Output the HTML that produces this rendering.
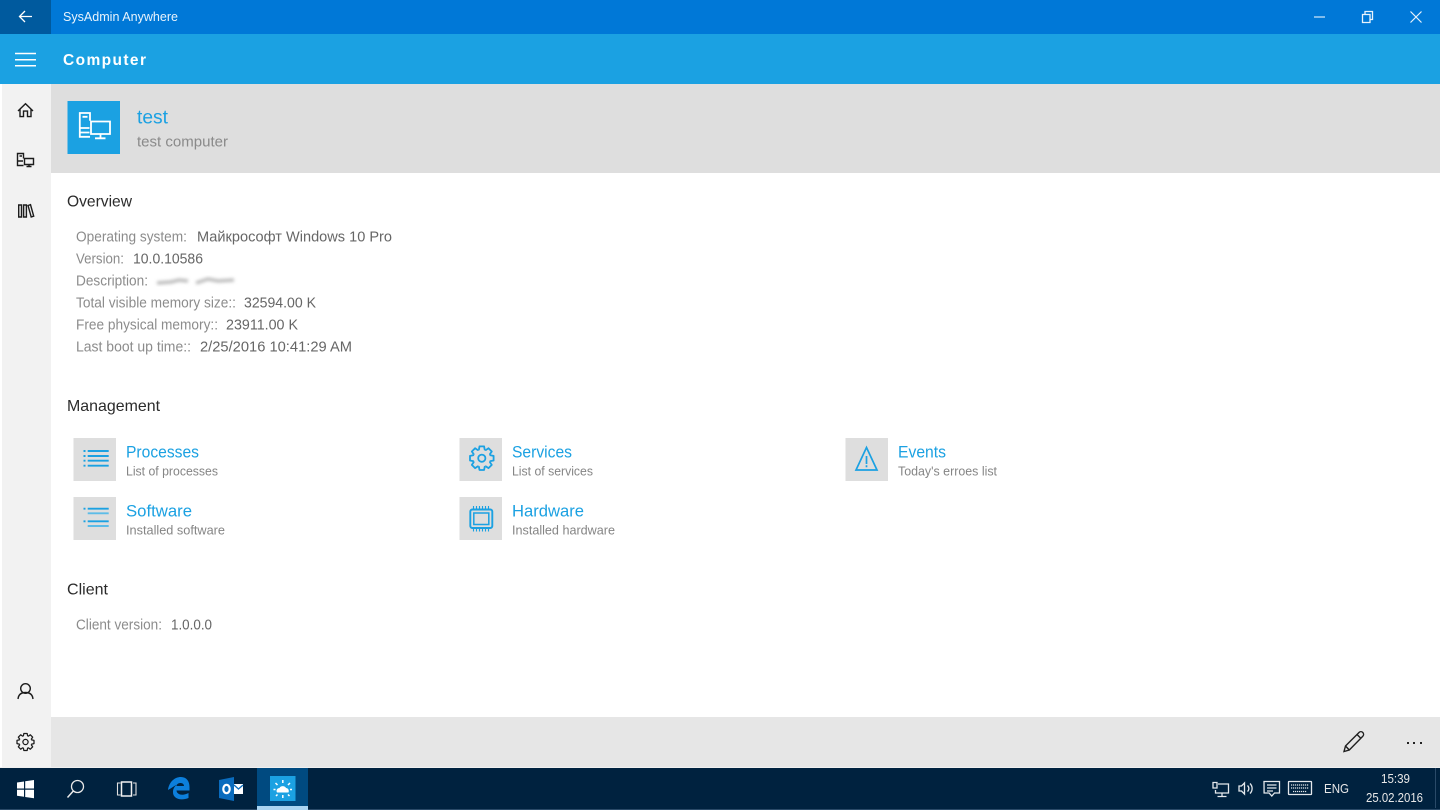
<!DOCTYPE html>
<html><head><meta charset="utf-8"><title>SysAdmin Anywhere</title>
<style>html,body{margin:0;padding:0;background:#fff;overflow:hidden}svg{display:block}text{font-family:"Liberation Sans",sans-serif}.fg{filter:blur(.3px)}</style></head>
<body>
<svg width="1440" height="810" viewBox="0 0 1440 810" xmlns="http://www.w3.org/2000/svg">
<defs>
<filter id="b" x="-20%" y="-100%" width="140%" height="300%"><feGaussianBlur stdDeviation="1.5"/></filter>
<g id="gear">
<path id="t" d="M-3.44 -8.31L-2.9 -8.6L-2.3 -11.8H2.3L2.9 -8.6L3.44 -8.31"/>
<use href="#t" transform="rotate(45)"/><use href="#t" transform="rotate(90)"/><use href="#t" transform="rotate(135)"/><use href="#t" transform="rotate(180)"/><use href="#t" transform="rotate(225)"/><use href="#t" transform="rotate(270)"/><use href="#t" transform="rotate(315)"/>
<circle r="3.600"/>
</g>
</defs>
<rect width="1440" height="810" fill="#fff"/>
<rect width="1440" height="34" fill="#0078d7"/>
<rect width="51" height="34" fill="#005a9e"/>
<rect y="34" width="1440" height="50" fill="#1ba1e2"/>
<rect y="84" width="51" height="684" fill="#f2f2f2"/>
<rect y="84" width="2" height="684" fill="#fff"/>
<rect x="51" y="84" width="1389" height="89" fill="#dedede"/>
<rect x="51" y="717" width="1389" height="50" fill="#e6e6e6"/>
<rect y="767" width="1440" height="1" fill="#f0f0f0"/>
<rect y="768" width="1440" height="42" fill="#00223f"/>
<rect y="809" width="1440" height="1" fill="#2a4a68"/>
<rect x="67.500" y="101" width="52.500" height="53" fill="#1ba1e2"/>
<rect x="73.500" y="438" width="42.500" height="43" fill="#dedede"/>
<rect x="73.500" y="497" width="42.500" height="43" fill="#dedede"/>
<rect x="459.500" y="438" width="42.500" height="43" fill="#dedede"/>
<rect x="459.500" y="497" width="42.500" height="43" fill="#dedede"/>
<rect x="845.500" y="438" width="42.500" height="43" fill="#dedede"/>
<rect x="257" y="768" width="51" height="38" fill="#004a80"/>
<rect x="257" y="806" width="51" height="4" fill="#a9d4f2"/>
<rect x="270" y="776" width="25.500" height="25" fill="#1ba1e2"/>

<g class="fg">
<!-- title bar -->
<path d="M32 16.500H19.500M25 11l-5.500 5.500 5.500 5.500" fill="none" stroke="#fff" stroke-width="1.300"/>
<text x="63" y="21" font-size="12.500" fill="#e8f3fc" textLength="115" lengthAdjust="spacingAndGlyphs">SysAdmin Anywhere</text>
<path d="M1314 17h11" stroke="#d5e9fa" stroke-width="1.200"/>
<path d="M1362.500 14.500h7.500v8h-7.500zM1365 14v-2.500h7.500v8H1370" fill="none" stroke="#e8f3fc" stroke-width="1.300"/>
<path d="M1410.500 11.500l11 11M1421.500 11.500l-11 11" stroke="#e8f3fc" stroke-width="1.200"/>

<!-- header -->
<path d="M15 53.500h21M15 59.800h21M15 65.800h21" stroke="#fff" stroke-width="1.500"/>
<text x="63" y="65" font-size="15.500" font-weight="bold" fill="#fff" textLength="83" lengthAdjust="spacing">Computer</text>

<!-- sidebar icons -->
<g fill="none" stroke="#1c1c1c" stroke-width="1.400">
<path d="M18 111l7.500-7.300 7.500 7.300M20 108.800v7.800h3.500v-5.500h4v5.500H31v-7.800"/>
<path d="M23.500 165.500h-6v-12h6v5M19.500 156h2.500M18 161h5"/>
<path d="M24.500 158.500h9v6h-9zM26.500 166.500h5M29 164.500v2"/>
<path d="M18.700 205h2.800v12h-2.800zM23.600 205h2.800v12h-2.800zM28 205.500l2.500-.8 3.200 11.500-2.500.8z"/>
<circle cx="25.500" cy="688.500" r="4.800"/>
<path d="M18 699c.5-4.500 3.500-6.500 7.500-6.500s7 2 7.500 6.500"/>
</g>
<use href="#gear" transform="translate(25.500 742) scale(.72)" fill="none" stroke="#1c1c1c" stroke-width="1.750" stroke-linejoin="round"/>

<!-- computer tile -->
<g fill="none" stroke="#fff" stroke-width="1.800">
<path d="M90 136.800H79.800V113H90v7.700M82.500 116.800h5M80 128h9.500M80 132.500h9.500"/>
<path d="M91 121.500h19v12.500H91zM100.500 134v4M95 138.300h10.500"/>
</g>
<text x="137" y="123.500" font-size="19.500" fill="#1ba1e2" textLength="31" lengthAdjust="spacingAndGlyphs">test</text>
<text x="137" y="146.500" font-size="15" fill="#8a8a8a" textLength="91" lengthAdjust="spacingAndGlyphs">test computer</text>

<!-- overview -->
<text x="67" y="206.500" font-size="16" fill="#2b2b2b" textLength="65" lengthAdjust="spacingAndGlyphs">Overview</text>
<g font-size="14.500" fill="#8c8c8c">
<text x="76" y="241.500" textLength="111" lengthAdjust="spacingAndGlyphs">Operating system:</text>
<text x="76" y="263.500" textLength="48" lengthAdjust="spacingAndGlyphs">Version:</text>
<text x="76" y="285.500" textLength="72" lengthAdjust="spacingAndGlyphs">Description:</text>
<text x="76" y="307.500" textLength="160" lengthAdjust="spacingAndGlyphs">Total visible memory size::</text>
<text x="76" y="329.500" textLength="142" lengthAdjust="spacingAndGlyphs">Free physical memory::</text>
<text x="76" y="351.500" textLength="115" lengthAdjust="spacingAndGlyphs">Last boot up time::</text>
<text x="76" y="629.500" textLength="86" lengthAdjust="spacingAndGlyphs">Client version:</text>
</g>
<g font-size="14.500" fill="#666">
<text x="197" y="241.500" textLength="195" lengthAdjust="spacingAndGlyphs">Майкрософт Windows 10 Pro</text>
<text x="133" y="263.500" textLength="70" lengthAdjust="spacingAndGlyphs">10.0.10586</text>
<text x="244" y="307.500" textLength="72" lengthAdjust="spacingAndGlyphs">32594.00 K</text>
<text x="226" y="329.500" textLength="72" lengthAdjust="spacingAndGlyphs">23911.00 K</text>
<text x="200" y="351.500" textLength="152" lengthAdjust="spacingAndGlyphs">2/25/2016 10:41:29 AM</text>
<text x="171" y="629.500" textLength="41" lengthAdjust="spacingAndGlyphs">1.0.0.0</text>
</g>

<!-- management -->
<text x="67" y="411" font-size="16" fill="#2b2b2b" textLength="93" lengthAdjust="spacingAndGlyphs">Management</text>

<g fill="none" stroke="#1ba1e2" stroke-width="1.900">
<path d="M87.700 451h21M87.700 456h21M87.700 460.700h21M87.700 465.700h21"/>
<path d="M83.500 451h2M83.500 456h2M83.500 460.700h2M83.500 465.700h2"/>
<path d="M87.700 508.700h21M87.700 521.300h21M83.500 508.700h2M83.500 521.300h2"/>
<path d="M87.700 513.300h21M87.700 526h21" stroke="#5cbce8"/>
<rect x="470.300" y="509.500" width="22" height="18.500" rx="2"/>
<rect x="473.800" y="513" width="15" height="11.500" stroke-width="1.500"/>
<path d="M473.500 506v3M476.500 506v3M479.500 506v3M482.500 506v3M485.500 506v3M488.500 506v3M473.500 528.500v3M476.500 528.500v3M479.500 528.500v3M482.500 528.500v3M485.500 528.500v3M488.500 528.500v3" stroke-width="1.100"/>
<path d="M866.500 447.500l10.500 22.500h-21zM866.500 456v8M866.500 465.200v2" stroke-width="1.700"/>
</g>
<use href="#gear" transform="translate(481.800 458.200)" fill="none" stroke="#1ba1e2" stroke-width="1.800" stroke-linejoin="round"/>

<g font-size="16.500" fill="#1ba1e2">
<text x="126" y="457.500" textLength="73" lengthAdjust="spacingAndGlyphs">Processes</text>
<text x="126" y="516.500" textLength="66" lengthAdjust="spacingAndGlyphs">Software</text>
<text x="512" y="457.500" textLength="60" lengthAdjust="spacingAndGlyphs">Services</text>
<text x="512" y="516.500" textLength="72" lengthAdjust="spacingAndGlyphs">Hardware</text>
<text x="898" y="457.500" textLength="48" lengthAdjust="spacingAndGlyphs">Events</text>
</g>
<g font-size="12.500" fill="#858585">
<text x="126" y="475.500" textLength="92" lengthAdjust="spacingAndGlyphs">List of processes</text>
<text x="126" y="534.500" textLength="99" lengthAdjust="spacingAndGlyphs">Installed software</text>
<text x="512" y="475.500" textLength="81" lengthAdjust="spacingAndGlyphs">List of services</text>
<text x="512" y="534.500" textLength="103" lengthAdjust="spacingAndGlyphs">Installed hardware</text>
<text x="898" y="475.500" textLength="99" lengthAdjust="spacingAndGlyphs">Today's erroes list</text>
</g>

<!-- client -->
<text x="67" y="594.500" font-size="16" fill="#2b2b2b" textLength="41" lengthAdjust="spacingAndGlyphs">Client</text>

<!-- app bar -->
<path d="M1344 751.500l1.500-5.500 13.500-13.500a2.500 2.500 0 0 1 3.800 3.800L1349.300 750zM1345.500 746l3.800 4M1357 734.500l3.800 3.800" fill="none" stroke="#1f1f1f" stroke-width="1.400"/>
<g fill="#222"><rect x="1407" y="742" width="2" height="2"/><rect x="1413" y="742" width="2" height="2"/><rect x="1420" y="742" width="2" height="2"/></g>

<!-- taskbar -->
<path d="M17 782.500l7-1v7h-7zM25.200 781.300l8.800-1.300v8.500h-8.800zM17 789.800h7v7l-7-1zM25.200 789.800H34v8.500l-8.800-1.300z" fill="#fff"/>
<circle cx="77.500" cy="786.500" r="6" fill="none" stroke="#e8e8e8" stroke-width="1.300"/>
<path d="M73.300 791l-5.800 6.500" stroke="#e8e8e8" stroke-width="1.500"/>
<path d="M120.500 783h-3v12h3M133 783h3v12h-3" fill="none" stroke="#e0e0e0" stroke-width="1.100"/>
<rect x="121.500" y="782" width="10" height="14" fill="none" stroke="#f0f0f0" stroke-width="1.500"/>
<!-- edge -->
<path d="M168 790c1-8 6.500-13 13-13 5.500 0 8.500 4.200 8.500 10v3.500h-13c.5 4.500 6.500 5.500 12 2.500v5c-7.500 3-16 1-15.500-6.500.2-3 1.500-5 4-7-2.500 1.300-5.500 3.500-9 5.500zm8.500-4h7.500c0-4-7-4-7.500 0z" fill="#0c7fdc"/>
<!-- outlook -->
<path d="M219 780l15-3v24l-15-3z" fill="#0a6cbe"/>
<rect x="234" y="784" width="9" height="10" fill="#fff"/>
<path d="M234 785l4.500 4 4.500-4" fill="none" stroke="#0a6cbe" stroke-width="1.300"/>
<ellipse cx="226.500" cy="789" rx="3.200" ry="4.200" fill="none" stroke="#fff" stroke-width="2.200"/>
<!-- active app icon -->
<path d="M277 792.500c-1.300-2.500.5-4.500 2.500-4.500 1-2.500 5.500-2.500 6.500 0 2 0 3.500 2.200 2.500 4.500z" fill="#fff"/>
<path d="M282.800 780v3M275.500 783l2 2M290 783l-2 2M273.500 789.500h2M290 789.500h2M276 796l1.500-1.500M289.500 796l-1.500-1.500M282.800 795v3" stroke="#fff" stroke-width="1.500"/>

<!-- tray -->
<g fill="none" stroke="#e4e8ec" stroke-width="1.300">
<path d="M1218 784h10.500v9h-13v-3M1222 793v3.500M1217.500 796.500h9"/>
<path d="M1213 782.500h4v5.500h-4z"/>
<path d="M1239 786h2.500l3-3v11l-3-3H1239zM1247.500 785.500a4 4 0 0 1 0 6M1250 783.500a7 7 0 0 1 0 10"/>
<path d="M1264 781.500h15.500v11.500h-5l-2.700 3-2.700-3h-5zM1267 785h9.500M1267 788h9.500M1267 791h6"/>
<rect x="1288.500" y="781.500" width="23" height="13" rx=".5"/>
<path d="M1291 785h18M1291 788h18M1293 791.500h14" stroke-dasharray="1.200 .8"/>
</g>
<text x="1324" y="793" font-size="13" fill="#e8e8e8" textLength="25" lengthAdjust="spacingAndGlyphs">ENG</text>
<text x="1381" y="783" font-size="13" fill="#e8e8e8" textLength="29" lengthAdjust="spacingAndGlyphs">15:39</text>
<text x="1366" y="802" font-size="13" fill="#e8e8e8" textLength="57" lengthAdjust="spacingAndGlyphs">25.02.2016</text>
<rect x="1435" y="768" width="1" height="40" fill="#2a4a68"/>
</g>
<g filter="url(#b)" fill="none" stroke="#bdbdbd" stroke-width="3.500">
<path d="M157 283l14-1 8-2 9 1M196 283l12-4 10 2 16-1"/>
</g>
</svg>
</body></html>
